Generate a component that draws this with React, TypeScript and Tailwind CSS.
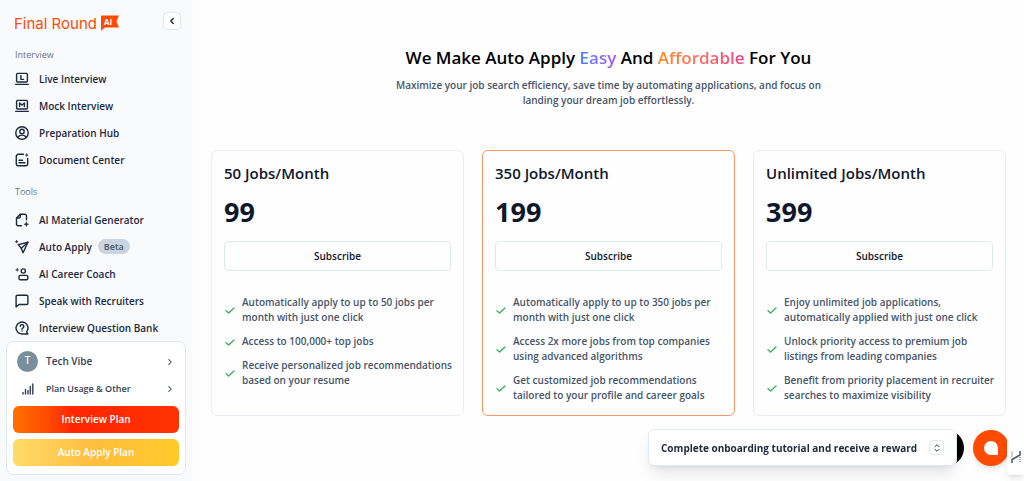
import React from "react";
import { ChevronLeft, ChevronRight, ChevronsUpDown } from "lucide-react";

const stroke = {
  fill: "none",
  stroke: "currentColor",
  strokeWidth: 1.4,
  strokeLinecap: "round" as const,
  strokeLinejoin: "round" as const,
};

function Icon({ children }: { children: React.ReactNode }) {
  return (
    <svg viewBox="0 0 14 14" className="h-3.5 w-3.5 shrink-0" aria-hidden="true" {...stroke}>
      {children}
    </svg>
  );
}

const icons = {
  live: (
    <Icon>
      <rect x="1.6" y="1.4" width="10.8" height="8.6" rx="1" />
      <path d="M0.7 12.4h12.6" />
      <path d="M5.9 3.8v3.6h2.6" />
    </Icon>
  ),
  mock: (
    <Icon>
      <rect x="1.6" y="1.4" width="10.8" height="8.6" rx="1" />
      <path d="M0.7 12.4h12.6" />
      <path d="M4.6 7.6V4l2.4 2 2.4-2v3.6" />
    </Icon>
  ),
  prep: (
    <Icon>
      <circle cx="7" cy="7" r="6.2" />
      <circle cx="7" cy="5.4" r="2.2" />
      <path d="M2.900 11.400c.8-1.700 2.300-2.300 4.100-2.300s3.300.6 4.100 2.300" />
    </Icon>
  ),
  doc: (
    <Icon>
      <path d="M8.500 1.300H3.300a2 2 0 0 0-2 2v7.400a2 2 0 0 0 2 2h7.400a2 2 0 0 0 2-2V5.500" />
      <path d="M4 7.300h3.500M4 9.800h6" />
      <path d="M11.700.5l.4 1.200 1.200.4-1.200.4-.4 1.200-.4-1.200-1.200-.4 1.200-.4z" fill="currentColor" strokeWidth="0.4" />
    </Icon>
  ),
  material: (
    <Icon>
      <path d="M6.500 12.700H3.300a1.800 1.800 0 0 1-1.800-1.800V5L5.200 1.300h4.500a1.800 1.800 0 0 1 1.800 1.800v3.700" />
      <path d="M5.300 1.500v2.300c0 .8-.4 1.200-1.200 1.200H1.700" />
      <path d="M11.300 8.700l.7 1.800 1.800.7-1.800.7-.7 1.800-.7-1.800-1.800-.7 1.800-.7z" fill="currentColor" strokeWidth="0.3" />
    </Icon>
  ),
  apply: (
    <Icon>
      <path d="M3.200 4.600L13 2.300 8 12.800 6.300 8.200z" />
      <path d="M6.300 8.200L13 2.300" />
      <path d="M1.600.2l.4 1.100 1.100.4-1.100.4-.4 1.100-.4-1.100L.1 1.700l1.100-.4z" fill="currentColor" strokeWidth="0.5" />
    </Icon>
  ),
  coach: (
    <Icon>
      <circle cx="8.300" cy="4" r="2.100" />
      <rect x="4" y="8.400" width="8.800" height="4.300" rx="1.200" />
      <path d="M2.200 1.300l.4 1.200 1.200.4-1.200.4-.4 1.200-.4-1.200L.6 2.900l1.200-.4z" fill="currentColor" strokeWidth="0.4" />
    </Icon>
  ),
  speak: (
    <Icon>
      <path d="M2.200 1.300h9.600a1.100 1.100 0 0 1 1.100 1.100v7a1.100 1.100 0 0 1-1.100 1.100H4.100L1.100 12.900V2.400a1.100 1.100 0 0 1 1.100-1.100z" />
    </Icon>
  ),
  question: (
    <Icon>
      <path d="M12.900 13H7a6 6 0 1 1 4.600-2.100z" />
      <path d="M5.200 5.300a1.800 1.800 0 1 1 2.800 1.600c-.7.4-1 .7-1 1.300M7 10v.1" />
    </Icon>
  ),
};

const groups = [
  {
    title: "Interview",
    titleGap: "pb-1",
    items: [
      { label: "Live Interview", icon: icons.live },
      { label: "Mock Interview", icon: icons.mock },
      { label: "Preparation Hub", icon: icons.prep },
      { label: "Document Center", icon: icons.doc },
    ],
  },
  {
    title: "Tools",
    titleGap: "pb-2",
    items: [
      { label: "AI Material Generator", icon: icons.material },
      { label: "Auto Apply", icon: icons.apply, badge: "Beta" },
      { label: "AI Career Coach", icon: icons.coach },
      { label: "Speak with Recruiters", icon: icons.speak },
      { label: "Interview Question Bank", icon: icons.question },
    ],
  },
];

const plans = [
  {
    name: "50 Jobs/Month",
    price: "99",
    features: [
      "Automatically apply to up to 50 jobs per month with just one click",
      "Access to 100,000+ top jobs",
      "Receive personalized job recommendations based on your resume",
    ],
  },
  {
    name: "350 Jobs/Month",
    price: "199",
    highlighted: true,
    features: [
      "Automatically apply to up to 350 jobs per month with just one click",
      "Access 2x more jobs from top companies using advanced algorithms",
      "Get customized job recommendations tailored to your profile and career goals",
    ],
  },
  {
    name: "Unlimited Jobs/Month",
    price: "399",
    features: [
      "Enjoy unlimited job applications, automatically applied with just one click",
      "Unlock priority access to premium job listings from leading companies",
      "Benefit from priority placement in recruiter searches to maximize visibility",
    ],
  },
];

function Sidebar() {
  return (
    <aside className="flex w-[193px] shrink-0 flex-col bg-[#f8fafc]">
      <div className="flex items-start justify-between pt-3 pr-3 pl-3.5">
        <a href="#home" className="flex items-center gap-1 text-[#fb4c08]">
          <span className="pt-0.5 font-['Inter',sans-serif] text-[15px] leading-5">Final Round</span>
          <span className="relative flex h-4 w-[18px] items-start justify-center">
            <svg viewBox="0 0 18 16" className="absolute inset-0 h-4 w-[18px]" aria-hidden="true">
              <path d="M1 .5h17l-2.600 6L18 12.500H4L0 15.800V1.500a1 1 0 0 1 1-1z" fill="#ff4a00" />
            </svg>
            <span className="relative pr-1 font-['Inter',sans-serif] text-[8px] leading-[14px] font-bold text-white">AI</span>
          </span>
        </a>
        <button aria-label="Collapse sidebar" className="flex h-[18px] w-[18px] items-center justify-center rounded border border-[#e2e8f0] bg-white">
          <ChevronLeft className="h-2.5 w-2.5" strokeWidth={3} />
        </button>
      </div>

      <nav className="min-h-0 flex-1 overflow-hidden pt-[15px] pl-[15px]">
        {groups.map((group) => (
          <section key={group.title} className="pb-[13px]">
            <h2 className={`text-[9px] leading-3 font-medium text-[#64748b] ${group.titleGap}`}>{group.title}</h2>
            <ul>
              {group.items.map((item) => (
                <li key={item.label}>
                  <a href="#nav" className="flex h-[27px] items-center gap-2.5 text-[10px] leading-4 font-semibold whitespace-nowrap text-[#1e293b]">
                    {item.icon}
                    <span>{item.label}</span>
                    {item.badge && (
                      <span className="-ml-1 rounded-full bg-[#cbd5e1] px-1.5 text-[9px] leading-[15px] text-[#475569]">{item.badge}</span>
                    )}
                  </a>
                </li>
              ))}
            </ul>
          </section>
        ))}
      </nav>

      <div className="mr-[7px] mb-1.5 ml-1.5 rounded-lg border border-[#e2e8f0] bg-white px-1.5 pt-1.5 pb-2">
        <button className="flex h-[27px] w-full items-center gap-2 px-1 text-[10px] font-semibold text-[#334155]">
          <span className="flex h-[21px] w-[21px] items-center justify-center rounded-full bg-[#78909c] font-['Roboto',sans-serif] text-[11px] font-normal text-white">T</span>
          <span className="flex-1 text-left">Tech Vibe</span>
          <ChevronRight className="h-2.5 w-2.5" strokeWidth={2.5} />
        </button>
        <button className="flex h-[27px] w-full items-center gap-3 px-1 pl-[9px] text-[9px] font-semibold text-[#334155]">
          <svg viewBox="0 0 12 12" className="h-3 w-3" {...stroke}>
            <path d="M1 9.500v1.500M3.500 6.500V11M6 7.500V11M8.300 3.500V11M10.800 1V11" />
          </svg>
          <span className="flex-1 text-left">Plan Usage &amp; Other</span>
          <ChevronRight className="h-2.5 w-2.5" strokeWidth={2.5} />
        </button>
        <div className="flex flex-col gap-1.5 pt-1">
          <button className="h-[27px] rounded-md bg-linear-to-r from-[#ff6f00] via-[#ff2500] via-35% to-[#ff3300] text-[10px] font-semibold text-white">Interview Plan</button>
          <button className="h-[27px] rounded-md bg-linear-to-r from-[#ffdb66] via-[#ffbd3d] via-50% to-[#ffca28] text-[10px] font-semibold text-white">Auto Apply Plan</button>
        </div>
      </div>
    </aside>
  );
}

export default function App() {
  return (
    <div className="flex h-screen overflow-hidden bg-[#fefefe] font-['Open_Sans',sans-serif] text-[#0f172a]">
      <Sidebar />
      <main className="min-w-0 flex-1 px-[18px] pt-11">
        <header className="mx-auto max-w-[440px] text-center">
          <h1 className="text-[17px] leading-7 font-semibold whitespace-nowrap text-black">
            We Make Auto Apply{" "}
            <span className="bg-linear-to-r from-[#3b82f6] to-[#a855f7] bg-clip-text text-transparent">Easy</span> And{" "}
            <span className="bg-linear-to-r from-[#fb8a1e] to-[#fb3b80] bg-clip-text text-transparent">Affordable</span> For You
          </h1>
          <p className="pt-1.5 text-[10px] leading-[15px] font-semibold text-[#475569]">
            Maximize your job search efficiency, save time by automating applications, and focus on landing your dream job effortlessly.
          </p>
        </header>

        <div className="grid grid-cols-3 gap-[18px] pt-[42px]">
          {plans.map((plan) => (
            <article
              key={plan.name}
              className={`rounded-md border px-3 pt-3 pb-3 ${plan.highlighted ? "border-[#fb9568]" : "border-[#e9edf3]"}`}
            >
              <h2 className="text-[15px] leading-5 font-semibold">{plan.name}</h2>
              <p className="pt-[11px] text-[27px] leading-9 font-bold">{plan.price}</p>
              <button className="mt-[11px] h-[30px] w-full rounded border border-[#e2e8f0] text-[10px] font-semibold">Subscribe</button>
              <ul className="-mr-2.5 flex flex-col gap-[9px] pt-6">
                {plan.features.map((feature) => (
                  <li key={feature} className="flex items-center gap-1.5 text-[10px] leading-[15px] font-semibold text-[#475569]">
                    <svg viewBox="0 0 12 12" className="h-3 w-3 shrink-0 text-[#3fae6a]" aria-hidden="true" {...stroke}>
                      <path d="M2 6.800L4.600 9 10 4" />
                    </svg>
                    <span>{feature}</span>
                  </li>
                ))}
              </ul>
            </article>
          ))}
        </div>
      </main>

      <div className="fixed right-[60px] bottom-[15px] h-9 w-9 rounded-full bg-black" />
      <div className="fixed right-[67px] bottom-[15px] flex h-[37px] w-[309px] items-center justify-between rounded-md border border-[#e2e8f0] bg-white px-3 shadow-lg">
        <p className="text-[10px] leading-4 font-bold whitespace-nowrap text-[#1e293b]">Complete onboarding tutorial and receive a reward</p>
        <button aria-label="Toggle tutorial" className="flex h-[15px] w-[15px] items-center justify-center rounded border border-[#e2e8f0]">
          <ChevronsUpDown className="h-2.5 w-2.5" strokeWidth={2} />
        </button>
      </div>
      <button aria-label="Open chat" className="fixed right-[15px] bottom-[15px] flex h-9 w-9 items-center justify-center rounded-full bg-[#ff4a00] shadow-md">
        <span className="h-3.5 w-3.5 rounded-full rounded-br-none bg-white" />
      </button>
      <button aria-label="Open side panel" className="fixed right-0 bottom-1.5 flex h-[37px] w-[17px] items-center justify-center rounded-l bg-white shadow-md">
        <svg viewBox="0 0 10 14" className="h-3.5 w-2.5" fill="none" stroke="#475569" strokeWidth="1.500">
          <path d="M1 13V9.500L9 5V1" />
          <path d="M1 1.500v6M9 7v6" strokeDasharray="1 1" strokeWidth="1" />
        </svg>
      </button>
    </div>
  );
}
